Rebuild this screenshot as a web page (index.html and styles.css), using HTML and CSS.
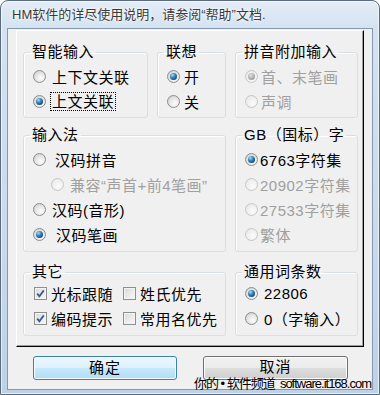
FILE: index.html
```html
<!DOCTYPE html>
<html lang="zh-CN">

<head>
    <meta charset="UTF-8">
    <title>输入法设置</title>
    <link rel="stylesheet" href="styles.css">
</head>

<body>
    <div class="window">
        <div class="titlebar">HM软件的详尽使用说明，请参阅“帮助”文档.</div>

        <div class="client">
            <div class="panel">
                <!-- Row 1 -->
                <fieldset class="group">
                    <legend>智能输入</legend>
                    <div class="opt"><span class="radio"></span><span>上下文关联</span></div>
                    <div class="opt opt-focus"><span class="radio on"></span><span class="focus">上文关联</span></div>
                </fieldset>

                <fieldset class="group g-assoc">
                    <legend>联想</legend>
                    <div class="opt"><span class="radio on"></span><span>开</span></div>
                    <div class="opt"><span class="radio"></span><span>关</span></div>
                </fieldset>

                <fieldset class="group g-pinyin">
                    <legend>拼音附加输入</legend>
                    <div class="opt off"><span class="radio on"></span><span>首、末笔画</span></div>
                    <div class="opt off"><span class="radio"></span><span>声调</span></div>
                </fieldset>

                <!-- Row 2 -->
                <fieldset class="group g-method">
                    <legend>输入法</legend>
                    <div class="opt opt-wide"><span class="radio"></span><span>汉码拼音</span></div>
                    <div class="opt opt-sub off"><span class="radio"></span><span>兼容“声首+前4笔画”</span></div>
                    <div class="opt"><span class="radio"></span><span>汉码(音形)</span></div>
                    <div class="opt opt-wider"><span class="radio on"></span><span>汉码笔画</span></div>
                </fieldset>

                <fieldset class="group g-gb">
                    <legend>GB（国标）字</legend>
                    <div class="opt"><span class="radio on"></span><span>6763字符集</span></div>
                    <div class="opt off"><span class="radio"></span><span>20902字符集</span></div>
                    <div class="opt off"><span class="radio"></span><span>27533字符集</span></div>
                    <div class="opt off"><span class="radio"></span><span>繁体</span></div>
                </fieldset>

                <!-- Row 3 -->
                <fieldset class="group g-other">
                    <legend>其它</legend>
                    <div class="checks">
                        <div class="opt"><span class="check"><svg width="9" height="9" viewBox="0 0 9 9"><path d="M1.2 4.6 L3.4 7.2 L7.8 1.4" fill="none" stroke="#3f5a92" stroke-width="1.8"/></svg></span><span>光标跟随</span></div>
                        <div class="opt"><span class="check"></span><span>姓氏优先</span></div>
                        <div class="opt"><span class="check"><svg width="9" height="9" viewBox="0 0 9 9"><path d="M1.2 4.6 L3.4 7.2 L7.8 1.4" fill="none" stroke="#3f5a92" stroke-width="1.8"/></svg></span><span>编码提示</span></div>
                        <div class="opt"><span class="check"></span><span>常用名优先</span></div>
                    </div>
                </fieldset>

                <fieldset class="group g-count">
                    <legend>通用词条数</legend>
                    <div class="opt"><span class="radio on"></span><span>22806</span></div>
                    <div class="opt"><span class="radio"></span><span>0（字输入）</span></div>
                </fieldset>
            </div>

            <div class="buttons">
                <button class="btn btn-default">确定</button>
                <button class="btn btn-cancel">取消</button>
            </div>
        </div>

        <div class="watermark">你的 • 软件频道 &nbsp;software.it168.com</div>
    </div>
</body>

</html>
```

FILE: styles.css
```css
* {
    box-sizing: border-box;
}

body {
    margin: 0;
    font-family: "Liberation Sans", "Noto Sans CJK SC", sans-serif;
    color: #000;
}

/* Window frame */
.window {
    position: relative;
    width: 380px;
    height: 395px;
    display: flex;
    flex-direction: column;
    padding: 0 6px 4px;
    border: 1px solid #5b6b7e;
    border-radius: 8px 8px 0 0;
    background: linear-gradient(to bottom, #e3ecf6 0, #d4e2f1 28px, #c8daec 60%, #bdd2e7 100%);
    box-shadow: inset 0 0 0 1px rgba(255, 255, 255, 0.6);
}

.titlebar {
    height: 27px;
    line-height: 27px;
    padding-left: 5px;
    font-size: 13px;
    color: #3a3a3a;
    white-space: nowrap;
    overflow: hidden;
    text-shadow: 0 0 4px #fff, 0 0 2px #fff;
}

.client {
    flex: 1;
    display: flex;
    flex-direction: column;
    background: #f0f0f0;
    border: 1px solid #8599b0;
}

/* Raised panel */
.panel {
    margin: 1px 8px 0;
    padding: 12px 5px 10px 6px;
    border: 1px solid;
    border-color: #fff #000 #000 #fff;
    box-shadow: inset -1px -1px 0 #a0a0a0;
    display: grid;
    grid-template-columns: 125px 69px 123px;
    column-gap: 9px;
    row-gap: 8px;
}

/* Group boxes */
.group {
    margin: 0;
    min-width: 0;
    padding: 3px 2px 3px 9px;
    border: 1px solid #d5dfe5;
    border-radius: 3px;
    box-shadow: inset 1px 1px 0 #fff;
}

.group legend {
    margin-left: -3px;
    padding: 0 2px;
    font-size: 15px;
    line-height: 18px;
    letter-spacing: 0.5px;
}

.g-method {
    grid-column: 1 / 3;
    padding-bottom: 4px;
}

.g-gb {
    padding-bottom: 4px;
}

.g-other {
    grid-column: 1 / 3;
}

.g-other,
.g-count {
    margin-top: 3px;
    padding-top: 0;
    padding-bottom: 4px;
}

/* Options */
.opt {
    display: flex;
    align-items: center;
    height: 25px;
    font-size: 15px;
    letter-spacing: 0.5px;
    white-space: nowrap;
}

.opt.off {
    color: #a0a0a0;
}

.radio {
    position: relative;
    flex: none;
    width: 13px;
    height: 13px;
    margin-right: 6px;
    border: 1px solid #8d8d8d;
    border-radius: 50%;
    background: radial-gradient(circle at 62% 66%, #fdfdfd 0, #e8e8e8 45%, #c9c9c9 100%);
}

.radio.on::after {
    content: "";
    position: absolute;
    left: 2px;
    top: 2px;
    width: 7px;
    height: 7px;
    border-radius: 50%;
    background: radial-gradient(circle at 35% 30%, #a8e0fa 0, #3c8dc6 35%, #0e4a7d 75%, #0a2f55 100%);
}

.off .radio {
    border-color: #c6c6c6;
    background: radial-gradient(circle at 62% 66%, #fbfbfb 0, #eeeeee 60%, #e0e0e0 100%);
}

.off .radio.on::after {
    background: radial-gradient(circle at 40% 35%, #e4e4e4 0, #ababab 55%, #8f8f8f 100%);
}

.opt-focus .radio {
    margin-right: 4px;
}

.focus {
    padding: 0 1px;
    line-height: 17px;
    border: 1px dotted #000;
}

.g-assoc .radio {
    margin-right: 4px;
}

.g-pinyin .radio {
    margin-right: 3px;
}

.g-gb .radio {
    margin-right: 2px;
}

.opt-wide .radio {
    margin-right: 9px;
}

.opt-wider .radio {
    margin-right: 10px;
}

.opt-sub .radio {
    margin-left: 18px;
}

/* Checkboxes */
.checks {
    display: grid;
    grid-template-columns: 89px auto;
    margin-left: 1px;
}

.check {
    flex: none;
    width: 13px;
    height: 13px;
    margin-right: 4px;
    display: flex;
    align-items: center;
    justify-content: center;
    border: 1px solid #8e8f8f;
    background: linear-gradient(135deg, #d9d9d9, #fafafa);
    box-shadow: inset 0 0 0 1px #f4f4f4;
}

/* Buttons */
.buttons {
    display: flex;
    justify-content: space-between;
    margin-top: 9px;
    padding: 0 24px 0 25px;
}

.btn {
    width: 144px;
    height: 24px;
    padding: 0;
    font-family: inherit;
    font-size: 15px;
    line-height: 20px;
    letter-spacing: 1px;
    color: #000;
    border: 1px solid #707070;
    border-radius: 3px;
    background: linear-gradient(to bottom, #f2f2f2 0, #ebebeb 48%, #dddddd 52%, #cfcfcf 100%);
    box-shadow: inset 0 0 0 1px #fbfbfb;
}

.btn-cancel {
    width: 145px;
    padding-bottom: 2px;
}

.btn-default {
    border-color: #3c7fb1;
    background: linear-gradient(to bottom, #edf7fd 0, #ddf1fc 48%, #c6e8fb 52%, #b0ddf5 100%);
    box-shadow: inset 0 0 0 1px #f4fbff;
}

/* Watermark over the dialog */
.watermark {
    position: absolute;
    right: 8px;
    bottom: 3px;
    font-size: 13px;
    line-height: 15px;
    letter-spacing: -1px;
    white-space: nowrap;
    color: #000;
}
```
